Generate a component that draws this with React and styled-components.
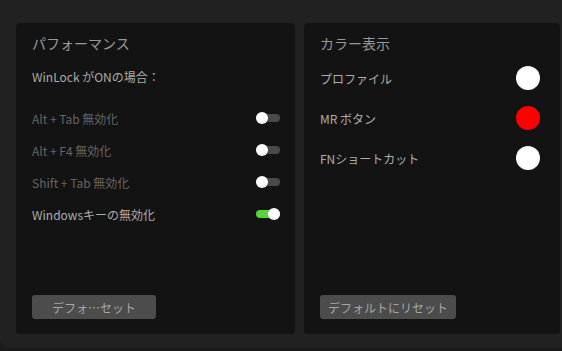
import React from "react";
import styled, { createGlobalStyle } from "styled-components";

const GlobalStyle = createGlobalStyle`
  html, body {
    margin: 0;
    padding: 0;
    background: #1a1a1a;
    font-family: "Noto Sans CJK JP", "Noto Sans", sans-serif;
  }
`;

const Screen = styled.div`
  width: 562px;
  height: 348px;
  box-sizing: border-box;
  padding: 23px 2px 14px 16px;
  background: #212121;
  border-bottom-left-radius: 8px;
  display: flex;
  gap: 9px;
`;

const Panel = styled.div`
  width: ${(p) => p.width || "auto"};
  flex: ${(p) => (p.width ? "none" : "1")};
  box-sizing: border-box;
  padding: 10px ${(p) => p.padRight || 15}px 15px 16px;
  background: #131313;
  border-radius: 4px;
  display: flex;
  flex-direction: column;
`;

const Title = styled.div`
  font-size: 14px;
  line-height: 20px;
  color: #999999;
  margin-bottom: ${(p) => p.gap}px;
`;

const Subtitle = styled.div`
  font-size: 12px;
  line-height: 20px;
  color: #ababab;
  margin-bottom: 15px;
`;

const Row = styled.div`
  height: ${(p) => p.height}px;
  display: flex;
  align-items: center;
  justify-content: space-between;
  font-size: 12px;
  color: ${(p) => (p.dim ? "#656565" : "#adadad")};
`;

const Track = styled.div`
  position: relative;
  width: 24px;
  height: 12px;
  &::before {
    content: "";
    position: absolute;
    left: 0;
    right: 0;
    top: 2px;
    height: 8px;
    border-radius: 4px;
    background: ${(p) => (p.on ? "#5ad23a" : "#4a4a4a")};
  }
  &::after {
    content: "";
    position: absolute;
    top: 0;
    left: ${(p) => (p.on ? "12px" : "0")};
    width: 12px;
    height: 12px;
    border-radius: 50%;
    background: #ffffff;
  }
`;

const Swatch = styled.div`
  width: 24px;
  height: 24px;
  border-radius: 50%;
  background: ${(p) => p.color};
`;

const ResetButton = styled.button`
  margin-top: auto;
  width: ${(p) => p.width}px;
  height: 24px;
  border: none;
  border-radius: 3px;
  background: #4c4c4c;
  color: #a6a6a6;
  font-family: inherit;
  font-size: 12px;
  padding: 0;
`;

const toggles = [
  { label: "Alt + Tab 無効化", on: false },
  { label: "Alt + F4 無効化", on: false },
  { label: "Shift + Tab 無効化", on: false },
  { label: "Windowsキーの無効化", on: true },
];

const colors = [
  { label: "プロファイル", color: "#ffffff" },
  { label: "MR ボタン", color: "#ff0000" },
  { label: "FNショートカット", color: "#ffffff" },
];

export default function App() {
  return (
    <>
      <GlobalStyle />
      <Screen>
        <Panel width="279px">
          <Title gap={14}>パフォーマンス</Title>
          <Subtitle>WinLock がONの場合：</Subtitle>
          {toggles.map((t) => (
            <Row key={t.label} height={32} dim={!t.on}>
              <span>{t.label}</span>
              <Track on={t.on} />
            </Row>
          ))}
          <ResetButton width={124}>デフォ…セット</ResetButton>
        </Panel>
        <Panel padRight={20}>
          <Title gap={5}>カラー表示</Title>
          {colors.map((c) => (
            <Row key={c.label} height={40}>
              <span>{c.label}</span>
              <Swatch color={c.color} />
            </Row>
          ))}
          <ResetButton width={136}>デフォルトにリセット</ResetButton>
        </Panel>
      </Screen>
    </>
  );
}
